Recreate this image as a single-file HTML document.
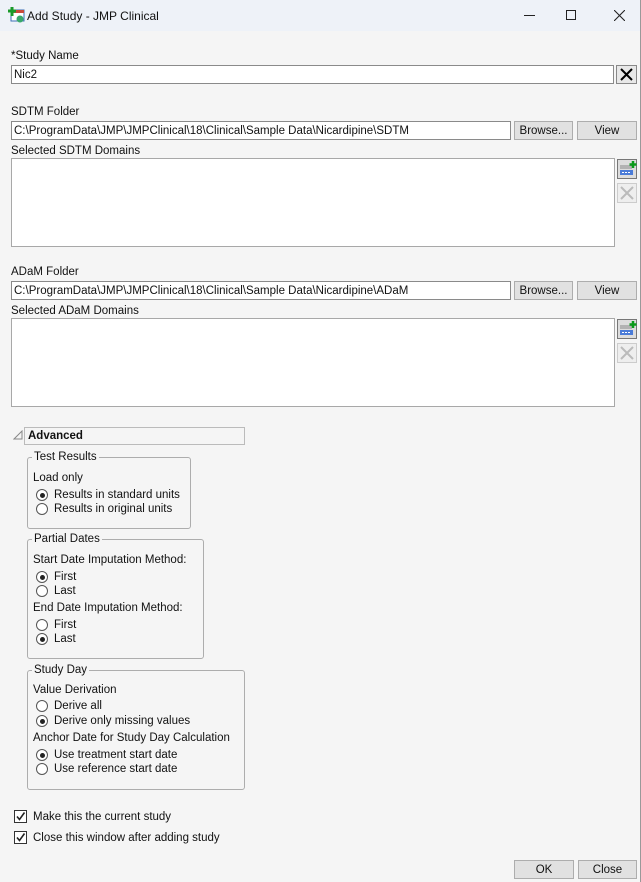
<!DOCTYPE html>
<html><head><meta charset="utf-8"><style>
*{box-sizing:border-box;margin:0;padding:0}
body{width:641px;height:882px;background:#f5f5f5;font-family:"Liberation Sans",sans-serif;font-size:11.5px;line-height:17px;color:#111;position:relative;overflow:hidden}
.a{position:absolute;white-space:nowrap}
.tb{left:0;top:0;width:641px;height:31px;background:#eef2f8}
.in{background:#fff;border:1px solid #8a8a8a;padding:1px 2px 0;font-size:11.5px;line-height:16px}
.btn{background:#e1e1e1;border:1px solid #adadad;text-align:center;line-height:19px;font-size:11.5px}
.box{background:#fff;border:1px solid #a8a8a8}
.grp{border:1px solid #adadad;border-radius:3px}
.lg{background:#f5f5f5;padding:0 2px}
.r{width:12px;height:12px;border:1px solid #555;border-radius:50%;background:#fff}
.r.on::after{content:"";position:absolute;left:2.5px;top:2.5px;width:5px;height:5px;border-radius:50%;background:#222}
.ck{width:13px;height:13px;border:1px solid #333;background:#fff}
</style></head><body>
<div class="a tb"></div>
<svg class="a" style="left:8px;top:6px" width="18" height="18" viewBox="0 0 18 18"><rect x="3" y="4" width="13" height="11" fill="#fff" stroke="#3a6db5"/><rect x="3" y="4" width="13" height="3" fill="#c94a3a"/><path d="M4 1v9M0 5h8" stroke="#1a9a2a" stroke-width="3"/><circle cx="12" cy="13" r="3.5" fill="#39a86b"/></svg>
<div class="a" style="left:27px;top:8px;font-size:12px">Add Study - JMP Clinical</div>
<div class="a" style="left:524px;top:15px;width:11px;height:1px;background:#222"></div>
<div class="a" style="left:566px;top:10px;width:10px;height:10px;border:1px solid #222"></div>
<svg class="a" style="left:614px;top:10px" width="11" height="11"><path d="M0 0L11 11M11 0L0 11" stroke="#222" stroke-width="1.1"/></svg>

<div class="a" style="left:11px;top:48px">*Study Name</div>
<div class="a in" style="left:11px;top:65px;width:603px;height:19px">Nic2</div>
<div class="a" style="left:616px;top:65px;width:21px;height:19px;border:1px solid #888;background:#e8e8e8"><svg width="19" height="17"><path d="M4 3L15 14M15 3L4 14" stroke="#000" stroke-width="2"/></svg></div>

<div class="a" style="left:11px;top:104px">SDTM Folder</div>
<div class="a in" style="left:11px;top:121px;width:500px;height:19px">C:\ProgramData\JMP\JMPClinical\18\Clinical\Sample Data\Nicardipine\SDTM</div>
<div class="a btn" style="left:514px;top:121px;width:59px;height:19px">Browse...</div>
<div class="a btn" style="left:577px;top:121px;width:60px;height:19px">View</div>
<div class="a" style="left:11px;top:143px">Selected SDTM Domains</div>
<div class="a box" style="left:11px;top:158px;width:604px;height:89px"></div>

<div class="a" style="left:11px;top:264px">ADaM Folder</div>
<div class="a in" style="left:11px;top:281px;width:500px;height:19px">C:\ProgramData\JMP\JMPClinical\18\Clinical\Sample Data\Nicardipine\ADaM</div>
<div class="a btn" style="left:514px;top:281px;width:59px;height:19px">Browse...</div>
<div class="a btn" style="left:577px;top:281px;width:60px;height:19px">View</div>
<div class="a" style="left:11px;top:303px">Selected ADaM Domains</div>
<div class="a box" style="left:11px;top:318px;width:604px;height:89px"></div>

<svg class="a" style="left:617px;top:159px" width="21" height="44"><rect x=".5" y=".5" width="19" height="19" fill="#ddd" stroke="#777"/><path d="M3 7h12M3 9h12" stroke="#888"/><rect x="3" y="11" width="13" height="5" fill="#4a7bd8"/><path d="M5 13.5h9" stroke="#fff" stroke-dasharray="2 1"/><path d="M16 2v7M12.5 5.5h7" stroke="#0a9a1a" stroke-width="2.5"/><rect x=".5" y="24.5" width="19" height="19" fill="#eee" stroke="#ccc"/><path d="M4 28L16 40M16 28L4 40" stroke="#bbb" stroke-width="2"/></svg>
<svg class="a" style="left:617px;top:319px" width="21" height="44"><rect x=".5" y=".5" width="19" height="19" fill="#ddd" stroke="#777"/><path d="M3 7h12M3 9h12" stroke="#888"/><rect x="3" y="11" width="13" height="5" fill="#4a7bd8"/><path d="M5 13.5h9" stroke="#fff" stroke-dasharray="2 1"/><path d="M16 2v7M12.5 5.5h7" stroke="#0a9a1a" stroke-width="2.5"/><rect x=".5" y="24.5" width="19" height="19" fill="#eee" stroke="#ccc"/><path d="M4 28L16 40M16 28L4 40" stroke="#bbb" stroke-width="2"/></svg>

<svg class="a" style="left:13px;top:430px" width="10" height="10"><path d="M9 1V9H1Z" fill="none" stroke="#888"/></svg>
<div class="a" style="left:24px;top:427px;width:221px;height:18px;border:1px solid #bbb;padding:0 3px;line-height:16px;font-weight:bold">Advanced</div>

<div class="a grp" style="left:27px;top:457px;width:164px;height:72px"></div>
<div class="a lg" style="left:32px;top:449px">Test Results</div>
<div class="a" style="left:33px;top:470px">Load only</div>
<div class="a r on" style="left:36px;top:489px"></div><div class="a" style="left:54px;top:487px">Results in standard units</div>
<div class="a r" style="left:36px;top:503px"></div><div class="a" style="left:54px;top:501px">Results in original units</div>

<div class="a grp" style="left:27px;top:539px;width:177px;height:120px"></div>
<div class="a lg" style="left:32px;top:531px">Partial Dates</div>
<div class="a" style="left:33px;top:552px">Start Date Imputation Method:</div>
<div class="a r on" style="left:36px;top:571px"></div><div class="a" style="left:54px;top:569px">First</div>
<div class="a r" style="left:36px;top:585px"></div><div class="a" style="left:54px;top:583px">Last</div>
<div class="a" style="left:33px;top:600px">End Date Imputation Method:</div>
<div class="a r" style="left:36px;top:619px"></div><div class="a" style="left:54px;top:617px">First</div>
<div class="a r on" style="left:36px;top:633px"></div><div class="a" style="left:54px;top:631px">Last</div>

<div class="a grp" style="left:27px;top:670px;width:218px;height:120px"></div>
<div class="a lg" style="left:32px;top:662px">Study Day</div>
<div class="a" style="left:33px;top:682px">Value Derivation</div>
<div class="a r" style="left:36px;top:700px"></div><div class="a" style="left:54px;top:698px">Derive all</div>
<div class="a r on" style="left:36px;top:715px"></div><div class="a" style="left:54px;top:713px">Derive only missing values</div>
<div class="a" style="left:33px;top:730px">Anchor Date for Study Day Calculation</div>
<div class="a r on" style="left:36px;top:749px"></div><div class="a" style="left:54px;top:747px">Use treatment start date</div>
<div class="a r" style="left:36px;top:763px"></div><div class="a" style="left:54px;top:761px">Use reference start date</div>

<div class="a ck" style="left:14px;top:810px"><svg width="11" height="11"><path d="M2 5.5L4.5 8.5L9.5 1.5" fill="none" stroke="#222" stroke-width="1.6"/></svg></div>
<div class="a" style="left:33px;top:809px">Make this the current study</div>
<div class="a ck" style="left:14px;top:831px"><svg width="11" height="11"><path d="M2 5.5L4.5 8.5L9.5 1.5" fill="none" stroke="#222" stroke-width="1.6"/></svg></div>
<div class="a" style="left:33px;top:830px">Close this window after adding study</div>

<div class="a btn" style="left:514px;top:860px;width:60px;height:19px">OK</div>
<div class="a btn" style="left:578px;top:860px;width:59px;height:19px">Close</div>
<div class="a" style="left:640px;top:0;width:1px;height:882px;background:#999"></div>
</body></html>
